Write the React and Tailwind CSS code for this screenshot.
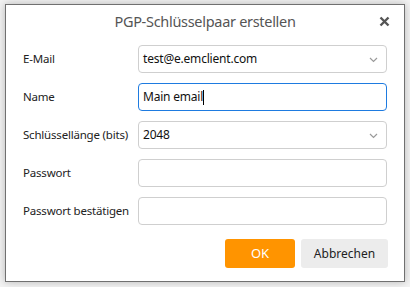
import React from 'react';

const fields = [
  { label: 'E-Mail', value: 'test@e.emclient.com', select: true },
  { label: 'Name', value: 'Main email', focused: true },
  { label: 'Schlüssellänge (bits)', value: '2048', select: true },
  { label: 'Passwort', value: '' },
  { label: 'Passwort bestätigen', value: '' },
];

const Chevron = () => (
  <svg width="9" height="6" viewBox="0 0 9 6" className="absolute right-[8px] top-[11px]">
    <path d="M1 1 L4.5 4.5 L8 1" fill="none" stroke="#9a9a9a" strokeWidth="1.2" />
  </svg>
);

const App = () => {
  return (
    <div className="w-[410px] h-[287px] bg-[#f3f3f3] pt-[4px] pl-[5px]" style={{ fontFamily: '"Noto Sans", "Open Sans", sans-serif' }}>
      <div className="w-[400px] h-[278px] bg-white border border-[#707070] shadow-[0_0_8px_rgba(0,0,0,0.25)] flex flex-col">
        {/* Header */}
        <div className="relative h-[34px] flex items-center justify-center">
          <span className="text-[14.5px] text-[#555] tracking-[-0.3px]">PGP-Schlüsselpaar erstellen</span>
          <svg width="11" height="11" viewBox="0 0 11 11" className="absolute right-[14px] top-[11px]">
            <path d="M1.5 1.5 L9.5 9.5 M9.5 1.5 L1.5 9.5" stroke="#555" strokeWidth="2.4" />
          </svg>
        </div>

        {/* Form */}
        <div className="flex flex-col gap-[10px] mt-[6px] pl-[17px] pr-[16px]">
          {fields.map(f => (
            <div key={f.label} className="flex items-center h-[28px]">
              <span className="w-[115px] text-[11.5px] text-[#222] tracking-[-0.2px] whitespace-nowrap">{f.label}</span>
              <div
                className={`relative w-[249px] h-[28px] rounded-[4px] border flex items-center pl-[4px] text-[12px] text-[#111] ${
                  f.focused ? 'border-[#1e7be0]' : 'border-[#cfcfcf]'
                }`}
              >
                <span className="tracking-[-0.2px]">{f.value}</span>
                {f.focused && <span className="w-[1px] h-[15px] bg-black" />}
                {f.select && <Chevron />}
              </div>
            </div>
          ))}
        </div>

        {/* Buttons */}
        <div className="flex justify-end gap-[6px] mt-[14px] pr-[16px]">
          <button className="w-[70px] h-[29px] rounded-[3px] bg-[#ff9400] text-white text-[13px]">OK</button>
          <button className="w-[87px] h-[29px] rounded-[3px] bg-[#ececec] text-[#222] text-[12px]">Abbrechen</button>
        </div>
      </div>
    </div>
  );
};

export default App;
